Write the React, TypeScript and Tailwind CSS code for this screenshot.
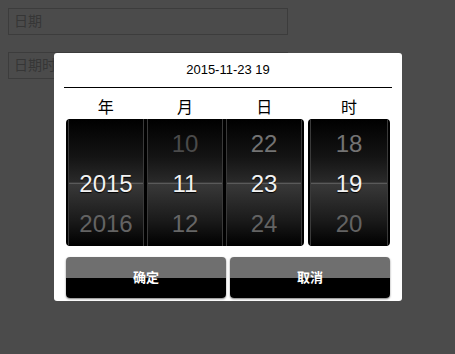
const font = "font-['Liberation_Sans','Noto_Sans_CJK_SC',Arial,sans-serif]"

type Col = { items: [string, string, string]; dim?: [string, string] }

const leftCols: Col[] = [
  { items: ["", "2015", "2016"] },
  { items: ["10", "11", "12"], dim: ["text-[#4a4a4a]", "text-[#666666]"] },
  { items: ["22", "23", "24"] },
]

function Wheel({ items, dim }: Col) {
  const top = dim ? dim[0] : "text-[#737373]"
  const bottom = dim ? dim[1] : "text-[#636363]"
  return (
    <div className="relative flex-1 h-full border-x border-[#3a3a3a] bg-[linear-gradient(to_bottom,#000_0%,#141414_30%,#2a2a2a_50%,#3a3a3a_50%,#1a1a1a_80%,#000_100%)]">
      <div className="absolute left-0 right-0 top-[64px] h-px bg-[#5a5a5a]" />
      <div className="relative flex flex-col pt-[5px]">
        <div className={`h-[40px] flex items-center justify-center text-[24px] ${top}`}>{items[0]}</div>
        <div className="h-[40px] flex items-center justify-center text-[24px] text-[#f2f2f2] [text-shadow:0_1px_1px_#000]">
          {items[1]}
        </div>
        <div className={`h-[40px] flex items-center justify-center text-[24px] ${bottom}`}>{items[2]}</div>
      </div>
    </div>
  )
}

export default function App() {
  return (
    <div className={`relative w-[455px] h-[354px] overflow-hidden bg-[#4b4b4b] ${font}`}>
      {/* Background form, dimmed by overlay */}
      <div className="flex flex-col gap-[17px] pt-[8px] pl-[8px]">
        <div className="w-[280px] h-[27px] border border-[#3c3c3c] flex items-center pl-[5px] text-[14px] text-[#363636]">
          日期
        </div>
        <div className="w-[280px] h-[27px] border border-[#3c3c3c] flex items-center pl-[5px] text-[14px] text-[#363636]">
          日期时间
        </div>
      </div>

      {/* Picker dialog */}
      <div className="absolute left-[54px] top-[53px] w-[348px] h-[248px] bg-white rounded-[3px] px-[10px]">
        <div className="h-[35px] flex items-center justify-center border-b border-black text-[13px] text-black">
          2015-11-23 19
        </div>

        <div className="px-[2px]">
          <div className="flex gap-[4px] h-[31px] items-center text-[16px] text-black pt-[8px]">
            <div className="w-[238px] flex">
              <span className="flex-1 text-center">年</span>
              <span className="flex-1 text-center">月</span>
              <span className="flex-1 text-center">日</span>
            </div>
            <span className="flex-1 text-center">时</span>
          </div>

          <div className="flex gap-[4px] h-[127px]">
            <div className="w-[238px] h-full flex gap-[3px] bg-black rounded-[4px] px-[2px] overflow-hidden">
              {leftCols.map((c, i) => (
                <Wheel key={i} {...c} />
              ))}
            </div>
            <div className="flex-1 h-full flex bg-black rounded-[4px] px-[2px] overflow-hidden">
              <Wheel items={["18", "19", "20"]} />
            </div>
          </div>

          <div className="flex gap-[4px] mt-[11px]">
            {["确定", "取消"].map((t) => (
              <button
                key={t}
                className="flex-1 h-[41px] rounded-[4px] bg-[linear-gradient(to_bottom,#6f6f6f_0%,#6f6f6f_50%,#000_50%,#000_100%)] text-white text-[13px] font-bold shadow-[0_1px_2px_rgba(0,0,0,0.5)]"
              >
                {t}
              </button>
            ))}
          </div>
        </div>
      </div>
    </div>
  )
}
